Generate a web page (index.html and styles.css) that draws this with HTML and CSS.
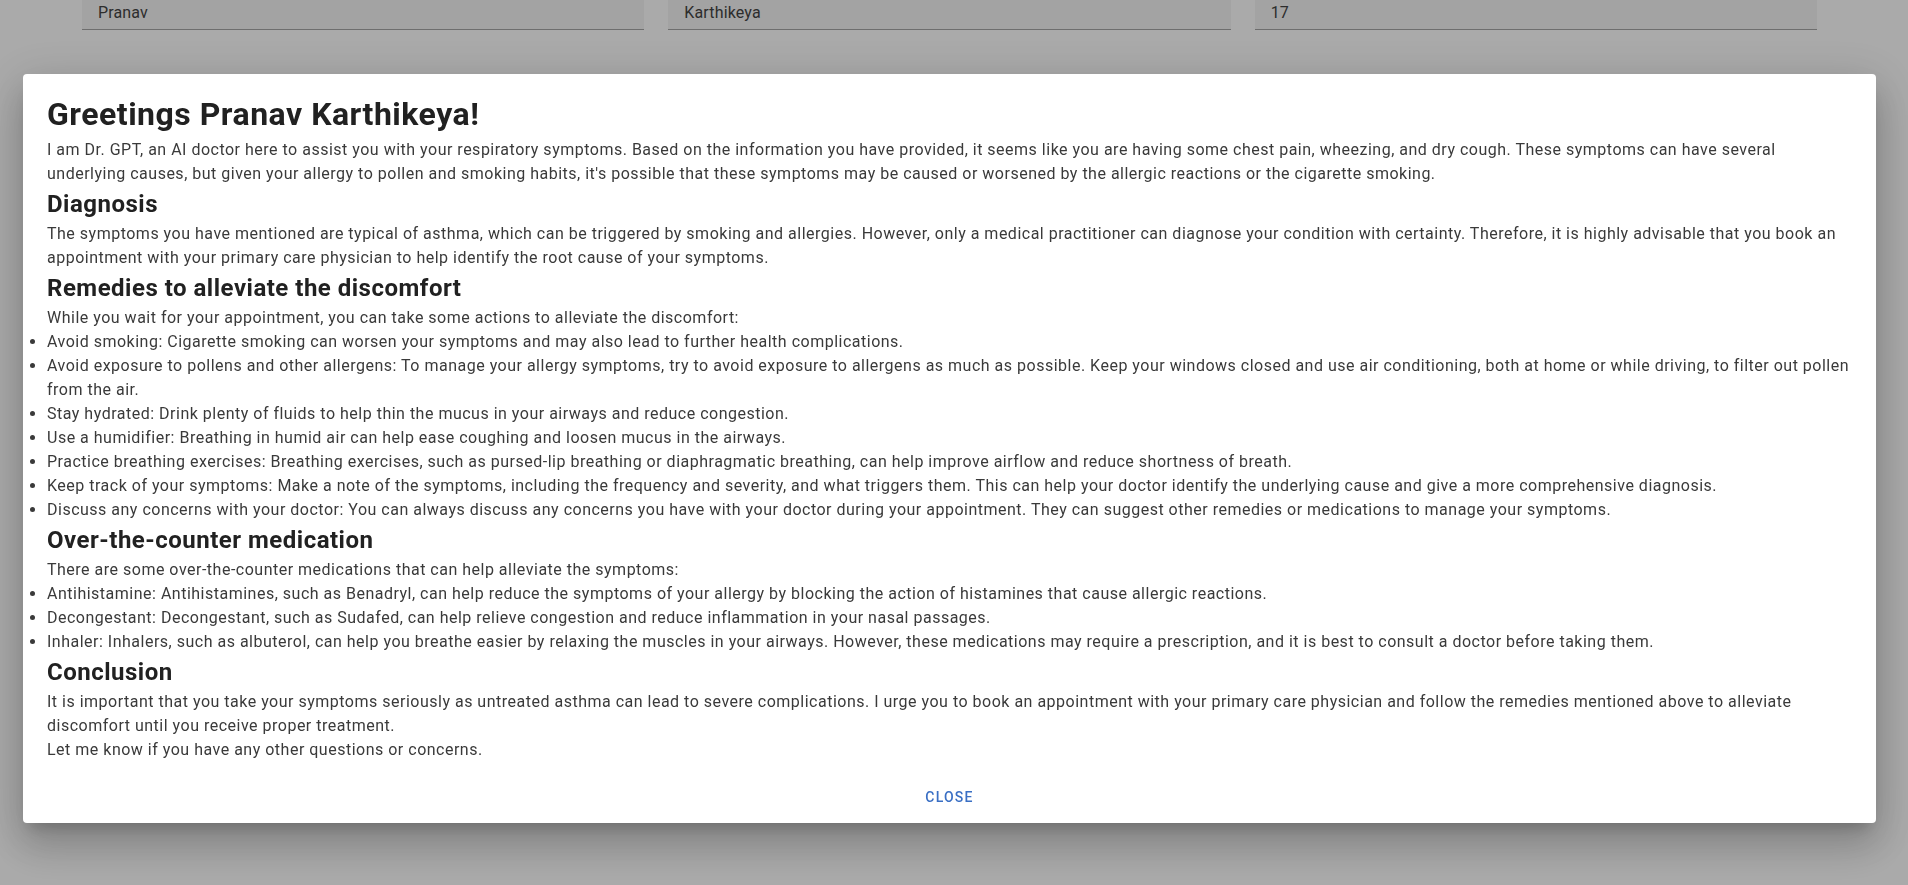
FILE: index.html
```html
<!DOCTYPE html>
<html lang="en">
<head>
<meta charset="utf-8">
<title>Dr. GPT</title>
<link rel="stylesheet" href="styles.css">
</head>
<body>
<div class="page">
  <div class="fields">
    <div class="field">Pranav</div>
    <div class="field">Karthikeya</div>
    <div class="field">17</div>
  </div>
</div>
<div class="backdrop">
  <div class="dialog">
    <div class="dialog-content">
      <h1 class="title">Greetings Pranav Karthikeya!</h1>
      <p class="text">I am Dr. GPT, an AI doctor here to assist you with your respiratory symptoms. Based on the information you have provided, it seems like you are having some chest pain, wheezing, and dry cough. These symptoms can have several underlying causes, but given your allergy to pollen and smoking habits, it's possible that these symptoms may be caused or worsened by the allergic reactions or the cigarette smoking.</p>
      <h2 class="section">Diagnosis</h2>
      <p class="text">The symptoms you have mentioned are typical of asthma, which can be triggered by smoking and allergies. However, only a medical practitioner can diagnose your condition with certainty. Therefore, it is highly advisable that you book an appointment with your primary care physician to help identify the root cause of your symptoms.</p>
      <h2 class="section">Remedies to alleviate the discomfort</h2>
      <p class="text">While you wait for your appointment, you can take some actions to alleviate the discomfort:</p>
      <ul class="list">
        <li>Avoid smoking: Cigarette smoking can worsen your symptoms and may also lead to further health complications.</li>
        <li>Avoid exposure to pollens and other allergens: To manage your allergy symptoms, try to avoid exposure to allergens as much as possible. Keep your windows closed and use air conditioning, both at home or while driving, to filter out pollen from the air.</li>
        <li>Stay hydrated: Drink plenty of fluids to help thin the mucus in your airways and reduce congestion.</li>
        <li>Use a humidifier: Breathing in humid air can help ease coughing and loosen mucus in the airways.</li>
        <li>Practice breathing exercises: Breathing exercises, such as pursed-lip breathing or diaphragmatic breathing, can help improve airflow and reduce shortness of breath.</li>
        <li>Keep track of your symptoms: Make a note of the symptoms, including the frequency and severity, and what triggers them. This can help your doctor identify the underlying cause and give a more comprehensive diagnosis.</li>
        <li>Discuss any concerns with your doctor: You can always discuss any concerns you have with your doctor during your appointment. They can suggest other remedies or medications to manage your symptoms.</li>
      </ul>
      <h2 class="section">Over-the-counter medication</h2>
      <p class="text">There are some over-the-counter medications that can help alleviate the symptoms:</p>
      <ul class="list">
        <li>Antihistamine: Antihistamines, such as Benadryl, can help reduce the symptoms of your allergy by blocking the action of histamines that cause allergic reactions.</li>
        <li>Decongestant: Decongestant, such as Sudafed, can help relieve congestion and reduce inflammation in your nasal passages.</li>
        <li>Inhaler: Inhalers, such as albuterol, can help you breathe easier by relaxing the muscles in your airways. However, these medications may require a prescription, and it is best to consult a doctor before taking them.</li>
      </ul>
      <h2 class="section">Conclusion</h2>
      <p class="text">It is important that you take your symptoms seriously as untreated asthma can lead to severe complications. I urge you to book an appointment with your primary care physician and follow the remedies mentioned above to alleviate discomfort until you receive proper treatment.</p>
      <p class="text">Let me know if you have any other questions or concerns.</p>
    </div>
    <div class="dialog-actions">
      <button class="btn-text" type="button">Close</button>
    </div>
  </div>
</div>
</body>
</html>
```

FILE: styles.css
```css
html, body {
  margin: 0;
  padding: 0;
  height: 100%;
}

body {
  background: #ffffff;
  font-family: Roboto, "Noto Sans", "Liberation Sans", sans-serif;
  color: rgba(0, 0, 0, 0.87);
  overflow: hidden;
  letter-spacing: 0.5px;
}

.page {
  padding: 0 91px 0 82px;
}

.fields {
  display: grid;
  grid-template-columns: repeat(3, 1fr);
  column-gap: 24px;
}

.field {
  background: rgba(0, 0, 0, 0.04);
  border-bottom: 1px solid rgba(0, 0, 0, 0.32);
  padding: 1px 16px 4px;
  font-size: 16px;
  line-height: 24px;
  color: #444;
  letter-spacing: 0.15px;
}

.backdrop {
  position: fixed;
  inset: 0;
  background: rgba(0, 0, 0, 0.335);
  display: flex;
  align-items: flex-start;
  padding: 74px 32px 0 23px;
}

.dialog {
  flex: 1;
  background: #ffffff;
  border-radius: 4px;
  box-shadow: 0px 11px 15px -7px rgba(0, 0, 0, 0.2),
              0px 24px 38px 3px rgba(0, 0, 0, 0.14),
              0px 9px 46px 8px rgba(0, 0, 0, 0.12);
  display: flex;
  flex-direction: column;
}

.dialog-content {
  padding: 16px 24px 9px;
}

.title {
  margin: 0;
  font-size: 32px;
  line-height: 48px;
  font-weight: 700;
  letter-spacing: 0.5px;
  color: #212121;
}

.section {
  margin: 0;
  font-size: 24px;
  line-height: 36px;
  font-weight: 700;
  letter-spacing: 0.5px;
  color: #212121;
}

.text {
  margin: 0;
  font-size: 16px;
  line-height: 24px;
  letter-spacing: 0.5px;
  color: #3a3a3a;
}

.list {
  margin: 0;
  padding: 0;
  font-size: 16px;
  line-height: 24px;
  letter-spacing: 0.5px;
  color: #3a3a3a;
}

.dialog-actions {
  display: flex;
  justify-content: center;
  padding: 8px;
}

.btn-text {
  background: none;
  border: 0;
  padding: 6px 8px;
  min-width: 64px;
  font-family: Roboto, "Noto Sans", sans-serif;
  font-size: 14px;
  font-weight: 500;
  line-height: 24px;
  letter-spacing: 1.2px;
  text-transform: uppercase;
  color: #3a6fc4;
  border-radius: 4px;
  cursor: pointer;
}
```
